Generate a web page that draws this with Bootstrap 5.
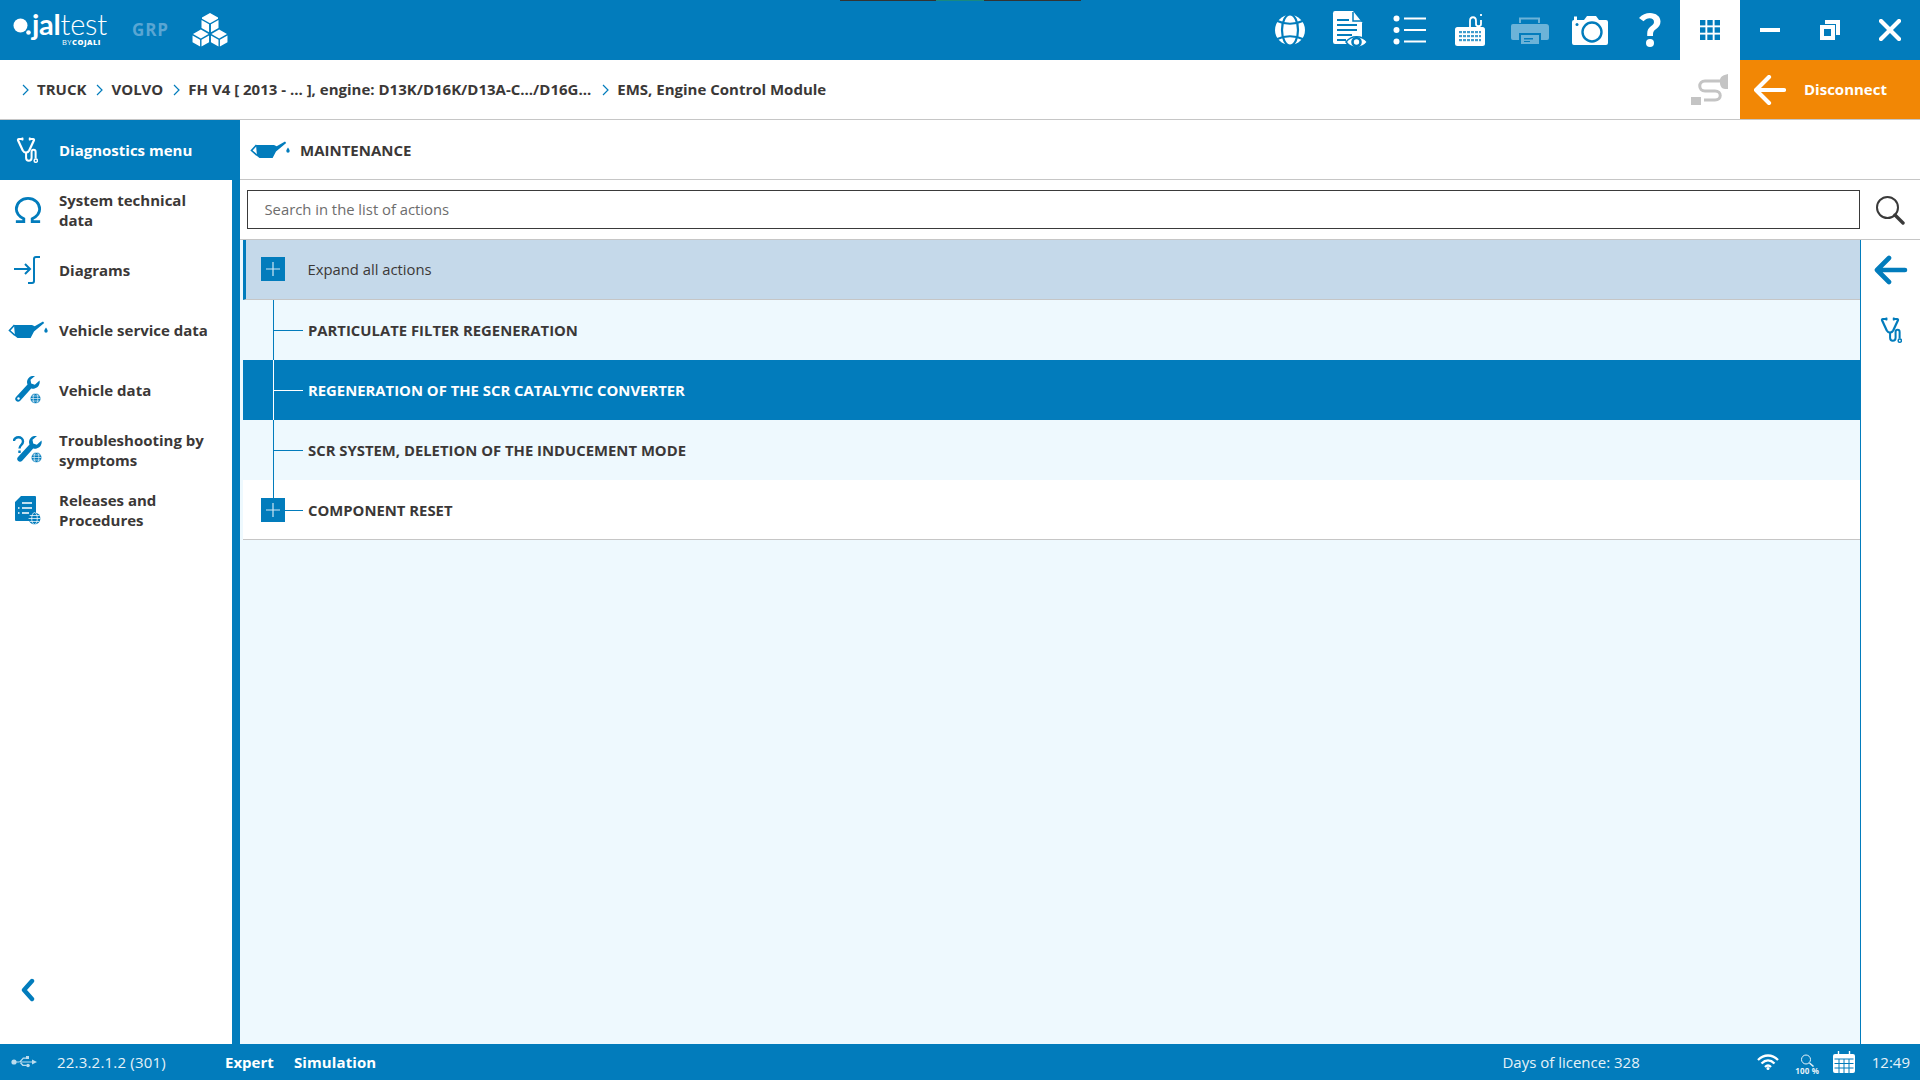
<!DOCTYPE html>
<html lang="en">
<head>
<meta charset="utf-8">
<title>Jaltest</title>
<link href="https://cdn.jsdelivr.net/npm/bootstrap@5.3.0/dist/css/bootstrap.min.css" rel="stylesheet">
<style>
:root{--jt:#027cbc;--ink:#3b3837;--rule:#c6c6c6;--pale:#eef9fe}
html,body{height:100%}
body{width:1920px;height:1080px;overflow:hidden;font-family:"Open Sans","Noto Sans",sans-serif;font-size:15px;color:var(--ink);background:#fff}
.jt-ink{color:var(--jt)}
.shell{height:1080px}
.topbar{height:60px;background:var(--jt);color:#fff;position:relative}
.topmark{position:absolute;top:0;left:840px;width:241px;height:1px;background:#333}
.topmark::after{content:"";position:absolute;left:96px;width:48px;height:1px;background:#1a8a80}
.logo-wrap{width:120px;height:60px;position:relative}
.logo-dot{position:absolute;left:13px;top:18px}
.logo-name{position:absolute;left:32px;top:11px;font-family:"Lato",sans-serif;font-size:29px;line-height:26px;letter-spacing:-.25px;font-weight:300}
.logo-name b{font-weight:700}
.logo-by{position:absolute;left:62px;top:38px;font-size:7.5px;line-height:9px;letter-spacing:.5px;white-space:nowrap}
.logo-by b{font-weight:800}
.grp{font-size:17px;font-weight:700;letter-spacing:.9px;color:#5aa6d3;margin-left:12px;width:60px}
.tool{height:60px;width:60px}
.tool-apps{background:#fff}
.crumbbar{height:60px;border-bottom:1px solid var(--rule);padding-left:21px;font-size:15px;font-weight:700}
.crumbbar svg{margin:0 8px 0 1px}
.crumbitem{margin-right:9px;white-space:nowrap}
.crumbitem.wide{margin-right:10px}
.disconnect{width:180px;height:59px;background:#f28705;color:#fff;font-weight:700;font-size:15px;align-self:flex-start}
.crumbbar .disconnect svg{margin:0 18px 0 14px}
.crumbbar .cable{margin:0 11px 0 0}
.mid{height:924px}
.sidebar{width:240px;flex:none;border-right:8px solid var(--jt)}
.sideitem{height:60px;font-weight:700;font-size:15px;line-height:20px;padding-right:8px}
.sideicon{width:59px;flex:none;display:flex;justify-content:center;padding-right:4px}
.sideitem.on{background:var(--jt);color:#fff;margin-right:-8px}
.sideitem.on .sideicon{padding-right:5px}
.collapser{padding:0 0 42px 21px}
.content{width:1620px;flex:none}
.subhead{height:60px;border-bottom:1px solid var(--rule);font-size:15px;font-weight:700;padding-top:1px}
.subhead svg{margin:0 10px 0 10px}
.searchrow{height:60px;border-bottom:1px solid var(--rule);padding:0 0 0 7px}
.searchbox{height:39px;width:1613px;border:1.5px solid #3a3a3a;padding:0 16.5px;font-size:14.8px;color:#6d6d6d;line-height:36px}
.listpane{flex:1;background:var(--pale);padding-left:3px}
.actionrow{height:60px;position:relative;font-size:14.85px;font-weight:700;padding-left:65px}
.actionrow.head{background:#c5d9ea;border-left:3px solid var(--jt);border-bottom:1px solid var(--rule);font-weight:400;font-size:14.8px;padding-left:61.500px}
.actionrow.sel{background:var(--jt);color:#fff}
.actionrow.closed{background:#fff;border-bottom:1px solid var(--rule);padding-top:1px}
.actionrow:not(.head)::before{content:"";position:absolute;left:30px;top:0;bottom:0;width:1px;background:var(--jt)}
.actionrow:not(.head)::after{content:"";position:absolute;left:31px;width:29px;top:50%;height:1px;background:var(--jt)}
.actionrow.sel::before,.actionrow.sel::after{background:#fff}
.actionrow.closed::before{bottom:40px}
.plusbox{position:absolute;left:18px;top:18px;width:24px;height:24px;z-index:1}
.actionrow.head .plusbox{left:15px;top:17px}
.rail{width:60px;flex:none}
.railhead{height:60px;border-bottom:1px solid var(--rule)}
.railbody{flex:1;border-left:1.5px solid var(--jt)}
.railbtn{height:60px;width:100%}
.status{height:36px;background:var(--jt);color:#e6f2f8;font-size:15px}
.status b{font-weight:700;color:#fff}
.status .usbmark{margin-left:11px}
.zoomtxt{font-size:8px;font-weight:700;line-height:8px;letter-spacing:.2px;white-space:nowrap}
.statver{margin-left:20px;width:168px;letter-spacing:.2px}
.statexp{width:69px}
.statsim{letter-spacing:.1px}
.stat-wifi{margin-left:117px}
.stat-zoom{margin-left:17px;width:23px;margin-top:4px}
.stat-cal{margin-left:14px}
.stat-clock{margin-left:17px;margin-right:10px}
</style>
</head>
<body>
<svg width="0" height="0" class="position-absolute">
<defs>
<symbol id="stetho" viewBox="0 0 24 28">
<path d="M7 2H3.200a1 1 0 0 0-1 1.400l5.200 11.200c1.800 3 5.400 3 7 0L19.600 3.400a1 1 0 0 0-1-1.400H15" fill="none" stroke="currentColor" stroke-width="2.400" stroke-linecap="round"/>
<path d="M7 .3v3.400M15 .3v3.400" stroke="currentColor" stroke-width="1.800"/>
<path d="M11 17v5.400c0 2 1.200 3.400 3 3.400s3-1.400 3-3.400v-6.200c0-1.500.8-2.400 2.200-2.400s2.200.9 2.200 2.400v7.200" fill="none" stroke="currentColor" stroke-width="2.200"/>
<circle cx="21.600" cy="25.600" r="1.800" fill="none" stroke="currentColor" stroke-width="1.600"/>
</symbol>
<symbol id="oilcan" viewBox="0 0 40 18">
<path d="M6.500 4 1.500 9.500l5.500 4.800" fill="none" stroke="currentColor" stroke-width="1.600"/>
<path d="M6 4H24l2.700 1.200L35 .4l1.200 1.600L26 10.400l-3.400 6.600H9.500L7 15z" fill="currentColor"/>
<path d="M38 6.500c1 1.700 1.700 2.500 1.700 3.600a1.700 1.700 0 0 1-3.400 0c0-1.100.7-1.900 1.700-3.600z" fill="currentColor"/>
</symbol>
<symbol id="webmark" viewBox="0 0 14 14">
<circle cx="7" cy="7" r="6.400" fill="currentColor"/>
<path d="M.6 7h12.800M1.800 3.800h10.400M1.800 10.200h10.400" stroke="#fff" stroke-width=".8"/>
<ellipse cx="7" cy="7" rx="3" ry="6.400" fill="none" stroke="#fff" stroke-width=".8"/>
</symbol>
<symbol id="plus" viewBox="0 0 24 24">
<rect width="24" height="24" fill="#027cbc"/>
<path d="M12 5v14M5 12h14" stroke="#cfe6f3" stroke-width="1.200"/>
</symbol>
<symbol id="crumb" viewBox="0 0 7 12"><path d="M1 1l5 5-5 5" fill="none" stroke="#027cbc" stroke-width="1.200"/></symbol>
</defs>
</svg>

<div class="shell d-flex flex-column">

  <!-- top bar -->
  <div class="topbar d-flex align-items-center">
    <div class="topmark"></div>
    <div class="logo-wrap">
      <svg class="logo-dot" width="19" height="20" viewBox="0 0 19 20"><circle cx="7.500" cy="7.500" r="7" fill="#fff"/><circle cx="15.500" cy="14.500" r="2.300" fill="#fff"/></svg>
      <span class="logo-name"><b>jal</b>test</span>
      <span class="logo-by">BY<b>COJALI</b></span>
    </div>
    <div class="grp">GRP</div>
    <svg width="36" height="34" viewBox="0 0 38 36" fill="#fff">
      <path d="M19 0l8.500 4.800v1.200L19 10.800 10.500 6V4.800zM10 7.300l8 4.500v8.700l-8-4.500zM28 7.300v8.700l-8 4.500v-8.700zM9.300 17.500l8.200 4.700-8.200 4.800-8.300-4.800zM28.700 17.500l8.300 4.700-8.300 4.800-8.200-4.800zM.5 23.700l8 4.500v7.300l-8-4.500zM18 23.700v7.300l-8 4.500v-7.300zM20 23.700l8 4.500v7.300l-8-4.500zM37.500 23.700v7.300l-8 4.500v-7.300z"/>
    </svg>
    <div class="ms-auto d-flex align-items-center">
      <div class="tool d-flex align-items-center justify-content-center">
        <svg width="32" height="32" viewBox="0 0 32 32"><circle cx="16" cy="16" r="15" fill="#fff"/><g fill="none" stroke="#027cbc" stroke-width="2.200"><ellipse cx="16" cy="16" rx="8" ry="15.500"/><path d="M2 6.500Q16 13 30 6.500M2 25.500Q16 19 30 25.500"/></g></svg>
      </div>
      <div class="tool d-flex align-items-center justify-content-center">
        <svg width="36" height="38" viewBox="0 0 36 38"><path d="M1 2a2 2 0 0 1 2-2h18l9 9.500V28H3a2 2 0 0 1-2-2z" transform="scale(1 1.180)" fill="#fff"/><path d="M21 1v9h9" fill="none" stroke="#027cbc" stroke-width="1.500"/><path d="M5 9h12M5 14h20M5 19h20M5 24h15M5 29h9" stroke="#027cbc" stroke-width="2.200"/><path d="M14 31c5-7 16-7 21.500 0-5.500 7-16.500 7-21.500 0z" fill="#fff" stroke="#027cbc" stroke-width="1.500"/><circle cx="24.500" cy="31" r="4" fill="none" stroke="#027cbc" stroke-width="2.600"/></svg>
      </div>
      <div class="tool d-flex align-items-center justify-content-center">
        <svg width="34" height="30" viewBox="0 0 34 30" fill="#fff"><circle cx="3.500" cy="3.500" r="3"/><circle cx="3.500" cy="15" r="3"/><circle cx="3.500" cy="26.500" r="3"/><path d="M11 2.500h22v2H11zM11 14h22v2H11zM11 25.500h22v2H11z"/></svg>
      </div>
      <div class="tool d-flex align-items-center justify-content-center">
        <svg width="32" height="32" viewBox="0 0 32 32"><path d="M16 14V7c0-5 6-5 6 0v3c0 3 5 3 5 0V6" fill="none" stroke="#fff" stroke-width="1.800"/><path d="M27 0v2" stroke="#fff" stroke-width="1.800"/><rect x="1" y="13" width="30" height="19" rx="2.500" fill="#fff"/><g fill="#027cbc"><rect x="5" y="17" width="22" height="2.200" opacity=".75"/><rect x="5" y="21" width="22" height="2.200" opacity=".75"/><rect x="5" y="25" width="22" height="2.200" opacity=".75"/><path d="M8 16h1v12H8zM12 16h1v12h-1zM16 16h1v12h-1zM20 16h1v12h-1zM24 16h1v12h-1z" fill="#fff"/></g></svg>
      </div>
      <div class="tool d-flex align-items-center justify-content-center">
        <svg width="40" height="28" viewBox="0 0 40 28" opacity=".42" fill="#fff"><path d="M9 7V1.500h21V7h-2V3.500H11V7z"/><path d="M3 8h33a3 3 0 0 1 3 3v11a2 2 0 0 1-2 2h-6v-7H9v7H3a2 2 0 0 1-2-2V10a2 2 0 0 1 2-2z"/><path d="M11 19h18v9H11zm3 3v1.500h9V22zm0 3v1h6v-1z" fill-rule="evenodd"/></svg>
      </div>
      <div class="tool d-flex align-items-center justify-content-center">
        <svg width="38" height="30" viewBox="0 0 38 30"><path d="M3 5V1.500h3V5h7l3-4h9l3 4h7a2 2 0 0 1 2 2v21a2 2 0 0 1-2 2H3a2 2 0 0 1-2-2V7a2 2 0 0 1 2-2z" fill="#fff"/><circle cx="21" cy="17" r="9.500" fill="none" stroke="#027cbc" stroke-width="2.400"/><circle cx="6" cy="9.500" r="1.500" fill="#027cbc"/></svg>
      </div>
      <div class="tool d-flex align-items-center justify-content-center">
        <svg width="22" height="34" viewBox="0 0 22 34" fill="#fff"><path d="M0 5C3 1.500 7 0 11 0c6 0 10.500 3.500 10.500 8.500 0 3.800-2 5.800-4.700 7.800-2 1.500-2.800 2.700-2.800 5V23H8.200v-2.400c0-3.600 1.300-5.500 3.700-7.300 2-1.500 3.100-2.600 3.100-4.400 0-2.200-1.800-3.600-4.400-3.600-2.300 0-4.200 1-6.100 3z"/><circle cx="11" cy="30" r="4"/></svg>
      </div>
      <div class="tool tool-apps d-flex align-items-center justify-content-center">
        <svg width="20" height="20" viewBox="0 0 20 20" fill="#027cbc"><rect width="5.400" height="5.400"/><rect x="7.300" width="5.400" height="5.400"/><rect x="14.600" width="5.400" height="5.400"/><rect y="7.300" width="5.400" height="5.400"/><rect x="7.300" y="7.300" width="5.400" height="5.400"/><rect x="14.600" y="7.300" width="5.400" height="5.400"/><rect y="14.600" width="5.400" height="5.400"/><rect x="7.300" y="14.600" width="5.400" height="5.400"/><rect x="14.600" y="14.600" width="5.400" height="5.400"/></svg>
      </div>
      <div class="tool d-flex align-items-center justify-content-center">
        <svg width="20" height="4" viewBox="0 0 20 4"><rect width="20" height="4" fill="#fff"/></svg>
      </div>
      <div class="tool d-flex align-items-center justify-content-center">
        <svg width="20" height="20" viewBox="0 0 20 20"><path d="M5 0h15v15h-4V4H5z" fill="#fff"/><path d="M0 5h15v15H0zM4 9v7h7V9z" fill="#fff" fill-rule="evenodd"/></svg>
      </div>
      <div class="tool d-flex align-items-center justify-content-center">
        <svg width="22" height="22" viewBox="0 0 22 22"><path d="M2 2l18 18M20 2L2 20" stroke="#fff" stroke-width="4.200" stroke-linecap="square"/></svg>
      </div>
    </div>
  </div>

  <!-- breadcrumb -->
  <div class="crumbbar d-flex align-items-center">
    <svg width="7" height="12"><use href="#crumb"/></svg><span class="crumbitem">TRUCK</span>
    <svg width="7" height="12"><use href="#crumb"/></svg><span class="crumbitem">VOLVO</span>
    <svg width="7" height="12"><use href="#crumb"/></svg><span class="crumbitem wide">FH V4 [ 2013 - ... ], engine: D13K/D16K/D13A-C.../D16G...</span>
    <svg width="7" height="12"><use href="#crumb"/></svg><span class="crumbitem">EMS, Engine Control Module</span>
    <svg class="cable ms-auto" width="38" height="32" viewBox="0 0 38 32"><path d="M29 7H13c-7 0-7 10 0 10h10c7 0 7 9 0 9H12" fill="none" stroke="#c4c4c4" stroke-width="3" transform="translate(1 0)"/><path d="M29 6c0-3 3-5 8-6v15h-3c-3 0-5-3-5-6z" fill="#c4c4c4"/><rect x="0" y="23" width="10" height="8" fill="#c4c4c4"/></svg>
    <div class="disconnect d-flex align-items-center"><svg width="32" height="30" viewBox="0 0 32 30"><path d="M15 2L2 15l13 13M3 15h27" fill="none" stroke="#fff" stroke-width="4.200" stroke-linecap="round" stroke-linejoin="round"/></svg>Disconnect</div>
  </div>

  <!-- middle -->
  <div class="mid d-flex">
    <nav class="sidebar d-flex flex-column">
      <div class="sideitem on d-flex align-items-center"><div class="sideicon"><svg width="22" height="26" class="text-white"><use href="#stetho"/></svg></div><span>Diagnostics menu</span></div>
      <div class="sideitem d-flex align-items-center"><div class="sideicon"><svg width="28" height="28" viewBox="0 0 30 28"><path d="M2 26.500h8.500v-3C5.500 21 2.500 17 2.500 13c0-6.500 5.500-11.500 12.500-11.500S27.500 6.500 27.500 13c0 4-3 8-8 10.500v3H28" fill="none" stroke="#027cbc" stroke-width="3"/></svg></div><span>System technical<br>data</span></div>
      <div class="sideitem d-flex align-items-center"><div class="sideicon"><svg width="28" height="28" viewBox="0 0 28 28"><path d="M0 13h16M11 8l5 5-5 5" fill="none" stroke="#027cbc" stroke-width="2"/><path d="M26 1h-4a2 2 0 0 0-2 2v22a2 2 0 0 1-2 2h-4" fill="none" stroke="#027cbc" stroke-width="2"/></svg></div><span>Diagrams</span></div>
      <div class="sideitem d-flex align-items-center"><div class="sideicon"><svg width="40" height="18" class="jt-ink"><use href="#oilcan"/></svg></div><span>Vehicle service data</span></div>
      <div class="sideitem d-flex align-items-center"><div class="sideicon"><svg width="26" height="28" viewBox="0 0 26 28" class="jt-ink"><path d="M24.500 4.500l-4.700 4.300-3.600-1.300-.7-3.800L20 0c-4-1-8 2-8 6 0 1 .2 1.800.5 2.600L1 21c-1.300 1.400-1 3 .2 4 1.200 1 2.800.9 4-.3l11-12.300c.9.300 1.800.4 2.800.3 3.800-.4 6.500-4.400 5.500-8.200z" fill="currentColor"/><circle cx="3.500" cy="22.500" r="1.200" fill="#fff"/><svg x="15" y="17" width="11" height="11"><use href="#webmark"/></svg></svg></div><span>Vehicle data</span></div>
      <div class="sideitem d-flex align-items-center"><div class="sideicon"><svg width="30" height="28" viewBox="0 0 30 28" class="jt-ink"><path d="M28.500 4.500l-4.700 4.300-3.600-1.300-.7-3.800L24 0c-4-1-8 2-8 6 0 1 .2 1.800.5 2.600L5 21c-1.300 1.400-1 3 .2 4 1.200 1 2.800.9 4-.3l11-12.300c.9.300 1.800.4 2.800.3 3.800-.4 6.500-4.400 5.500-8.200z" fill="currentColor"/><path d="M1 5c0-5 9-5 9 .5 0 3.500-3.500 3.500-3.500 7M6.500 14.500v2.500" fill="none" stroke="currentColor" stroke-width="2.400"/><svg x="18" y="16" width="11" height="11"><use href="#webmark"/></svg></svg></div><span>Troubleshooting by<br>symptoms</span></div>
      <div class="sideitem d-flex align-items-center"><div class="sideicon"><svg width="26" height="30" viewBox="0 0 26 30" class="jt-ink"><path d="M6 1h14a1 1 0 0 1 1 1v17a6 6 0 0 0-6 7H1a1 1 0 0 1-1-1V7z" fill="currentColor"/><path d="M7 8h10M7 13h10M7 18h7M3 13h1.500M3 18h1.500" stroke="#fff" stroke-width="1.300"/><svg x="13" y="17" width="13" height="13"><use href="#webmark"/></svg></svg></div><span>Releases and<br>Procedures</span></div>
      <div class="collapser mt-auto"><svg width="14" height="24" viewBox="0 0 14 24"><path d="M11 3L3 12l8 9" fill="none" stroke="#027cbc" stroke-width="4.400" stroke-linecap="round" stroke-linejoin="round"/></svg></div>
    </nav>

    <section class="content d-flex flex-column">
      <div class="subhead d-flex align-items-center"><svg width="40" height="18" class="jt-ink"><use href="#oilcan"/></svg><span>MAINTENANCE</span></div>
      <div class="searchrow d-flex align-items-center"><div class="searchbox">Search in the list of actions</div></div>
      <div class="listpane">
        <div class="actionrow head d-flex align-items-center"><svg class="plusbox"><use href="#plus"/></svg><span>Expand all actions</span></div>
        <div class="actionrow d-flex align-items-center"><span>PARTICULATE FILTER REGENERATION</span></div>
        <div class="actionrow sel d-flex align-items-center"><span>REGENERATION OF THE SCR CATALYTIC CONVERTER</span></div>
        <div class="actionrow d-flex align-items-center"><span>SCR SYSTEM, DELETION OF THE INDUCEMENT MODE</span></div>
        <div class="actionrow closed d-flex align-items-center"><svg class="plusbox"><use href="#plus"/></svg><span>COMPONENT RESET</span></div>
      </div>
    </section>

    <aside class="rail d-flex flex-column">
      <div class="railhead"></div>
      <div class="railhead d-flex align-items-center justify-content-center"><svg width="30" height="30" viewBox="0 0 30 30"><circle cx="12.500" cy="12.500" r="10.500" fill="none" stroke="#3a3a3a" stroke-width="2"/><path d="M20 20l8 8" stroke="#3a3a3a" stroke-width="3.400" stroke-linecap="round"/></svg></div>
      <div class="railbody">
        <div class="railbtn d-flex align-items-center justify-content-center"><svg width="34" height="30" viewBox="0 0 34 30"><path d="M15 3L3 15l12 12M4 15h27" fill="none" stroke="#027cbc" stroke-width="4.600" stroke-linecap="round" stroke-linejoin="round"/></svg></div>
        <div class="railbtn d-flex align-items-center justify-content-center"><svg width="22" height="26" class="jt-ink"><use href="#stetho"/></svg></div>
      </div>
    </aside>
  </div>

  <!-- status -->
  <footer class="status d-flex align-items-center">
    <svg class="usbmark" width="26" height="14" viewBox="0 0 26 14" fill="#bcdcee"><circle cx="3" cy="7" r="2.600"/><path d="M3 6.400h20v1.200H3zM8 7l4-4.500h4v1.200h-3.400L9.600 7zM8 7l3.500 4h4V9.800h-3L9.600 7z"/><path d="M21 4.500l5 2.500-5 2.500z"/><rect x="15" y="1" width="3" height="3"/><circle cx="17" cy="10.500" r="1.800"/></svg>
    <span class="statver">22.3.2.1.2 (301)</span>
    <b class="statexp">Expert</b>
    <b class="statsim">Simulation</b>
    <span class="ms-auto">Days of licence: 328</span>
    <svg class="stat-wifi" width="22" height="16" viewBox="0 0 22 16"><path d="M1 6c6-6 14-6 20 0M4.500 9.500c4-4 9-4 13 0M8 13c2-2 4-2 6 0" fill="none" stroke="#fff" stroke-width="2.300"/><circle cx="11" cy="14.500" r="1.500" fill="#fff"/></svg>
    <div class="d-flex flex-column align-items-center stat-zoom"><svg width="15" height="13" viewBox="0 0 15 13"><circle cx="6" cy="5.500" r="4.500" fill="none" stroke="#e6f2f8" stroke-width="1"/><path d="M9.500 9l4 3.500" stroke="#e6f2f8" stroke-width="1.500"/></svg><span class="zoomtxt">100 %</span></div>
    <svg class="stat-cal" width="22" height="22" viewBox="0 0 22 22"><path d="M2 3h18a2 2 0 0 1 2 2v15a2 2 0 0 1-2 2H2a2 2 0 0 1-2-2V5a2 2 0 0 1 2-2z" fill="#fff"/><path d="M1.500 8h19M1.500 12.500h19M1.500 17h19M6 8v14M11 8v14M16 8v14" stroke="#027cbc" stroke-width="1"/><path d="M5.500 0v5M16.500 0v5" stroke="#fff" stroke-width="1.400"/></svg>
    <span class="stat-clock">12:49</span>
  </footer>
</div>
</body>
</html>
